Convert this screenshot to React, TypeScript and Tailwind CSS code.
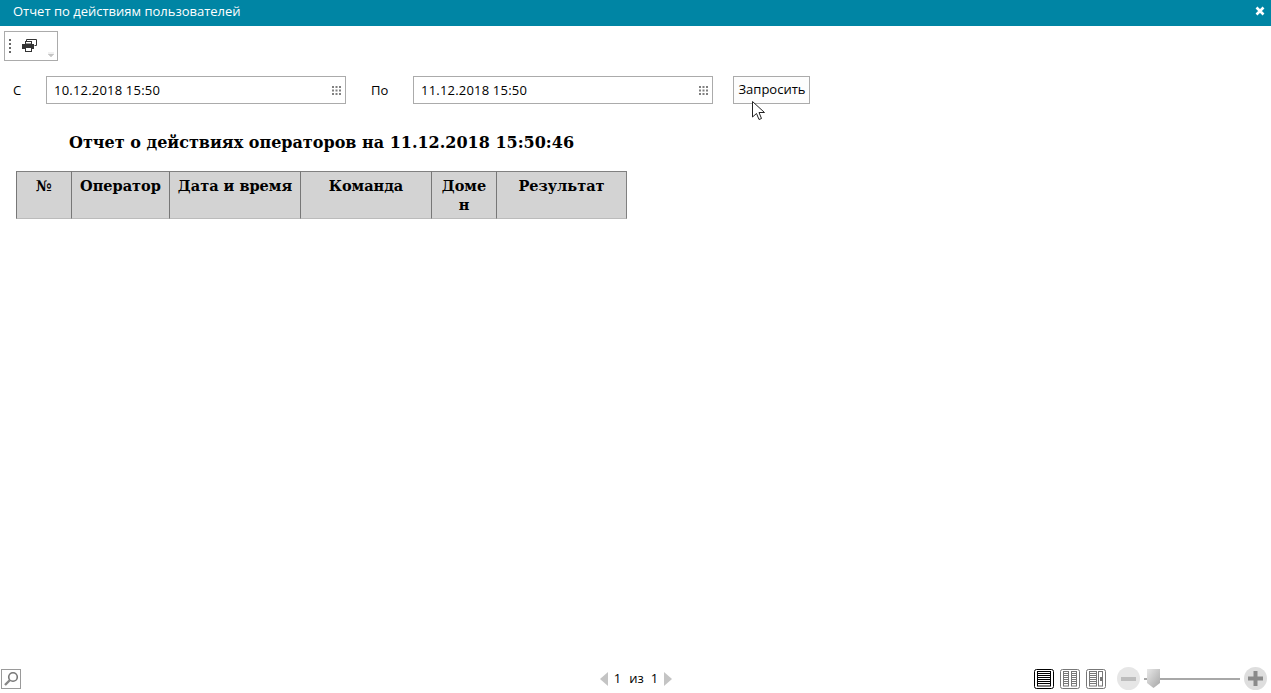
const uiFont = "font-['Open_Sans','Noto_Sans',sans-serif]";

function GridDots() {
  return (
    <svg width="9" height="9" viewBox="0 0 9 9" className="shrink-0">
      <path fill="#808080" d="M0 0h2v2H0zM3.500 0h2v2h-2zM7 0h2v2H7zM0 3.500h2v2H0zM3.500 3.500h2v2h-2zM7 3.500h2v2H7zM0 7h2v2H0zM3.500 7h2v2h-2zM7 7h2v2H7z" />
    </svg>
  );
}

function DateField({ value }: { value: string }) {
  return (
    <div className="flex h-7 w-[300px] items-center justify-between border border-[#ababab] bg-white pr-[4px] pl-[7px] text-[13px] text-black">
      <span className="translate-y-px tracking-[0.2px]">{value}</span>
      <GridDots />
    </div>
  );
}

function PrintIcon() {
  return (
    <svg width="15" height="13" viewBox="0 0 15 13">
      <path fill="none" stroke="#333" strokeWidth="1" d="M4.500 3V.5h10v6h-2" />
      <path fill="#333" d="M0 5h12v5h-2V8H3v2H0z" />
      <rect x="3.500" y="2.500" width="6" height="2.500" fill="#fff" stroke="#333" />
      <rect x="3.500" y="8.500" width="6" height="4" fill="#fff" stroke="#333" />
    </svg>
  );
}

function ViewIcon({ kind, active }: { kind: "single" | "double" | "side"; active?: boolean }) {
  const c = active ? "#000" : "#777";
  const lines = (x: number, w: number) =>
    [4, 6, 8, 10, 12, 14].map((y) => (
      <path key={`${x}-${y}`} d={`M${x} ${y + 0.5}h${w}`} stroke={c} strokeWidth="1" />
    ));
  return (
    <svg width="20" height="20" viewBox="0 0 20 20">
      <rect x="0.500" y="0.500" width="19" height="19" rx="2" fill="#fff" stroke={c} />
      {kind === "single" && (
        <>
          <rect x="3.500" y="2.500" width="13" height="14.500" fill="none" stroke={c} />
          {lines(4, 12)}
        </>
      )}
      {kind === "double" && (
        <>
          <rect x="3.500" y="2.500" width="5" height="14.500" fill="none" stroke={c} />
          <rect x="11.500" y="2.500" width="5" height="14.500" fill="none" stroke={c} />
          {lines(4, 4)}
          {lines(12, 4)}
        </>
      )}
      {kind === "side" && (
        <>
          <rect x="3.500" y="2.500" width="7" height="14.500" fill="none" stroke={c} />
          <rect x="12.500" y="2.500" width="4" height="14.500" fill="none" stroke={c} />
          {lines(4, 6)}
          <rect x="14" y="8" width="2.500" height="4" fill={c} />
        </>
      )}
    </svg>
  );
}

const columns = [
  { label: "№", width: "w-[55px]" },
  { label: "Оператор", width: "w-[98px]" },
  { label: "Дата и время", width: "w-[131px]" },
  { label: "Команда", width: "w-[131px]" },
  { label: "Домен", width: "w-[65px]" },
  { label: "Результат", width: "w-[131px]" },
];

export default function App() {
  return (
    <div className={`relative flex h-[693px] flex-col overflow-hidden bg-white ${uiFont}`}>
      {/* title bar */}
      <div className="flex h-[26px] items-center justify-between bg-[#0085a4] pr-[6px] pl-[13px] text-[13px] text-white">
        <span className="-translate-y-px">Отчет по действиям пользователей</span>
        <svg width="10" height="10" viewBox="0 0 10 10" className="-translate-y-[2px]">
          <path d="M1.500 1.500l7 7M8.500 1.500l-7 7" stroke="#fff" strokeWidth="2.600" />
        </svg>
      </div>

      {/* toolbar */}
      <div className="px-1 pt-[5px]">
        <div className="flex h-[30px] w-[54px] items-center border border-[#ababab] pl-[4px]">
          <div className="flex flex-col gap-[2px]">
            <span className="h-[2px] w-[2px] bg-[#666]" />
            <span className="h-[2px] w-[2px] bg-[#666]" />
            <span className="h-[2px] w-[2px] bg-[#666]" />
            <span className="h-[2px] w-[2px] bg-[#666]" />
          </div>
          <div className="mb-[2px] ml-[11px]">
            <PrintIcon />
          </div>
          <svg width="6" height="5" viewBox="0 0 6 5" className="mt-[17px] ml-[11px]">
            <path d="M0 0h6M0 2h6L3 5z" fill="#c4c4c4" stroke="#c4c4c4" strokeWidth="0.500" />
          </svg>
        </div>
      </div>

      {/* query form */}
      <div className="mt-[15px] flex items-center text-[13px] text-black">
        <span className="w-[46px] translate-y-px pl-[13px]">С</span>
        <DateField value="10.12.2018 15:50" />
        <span className="w-[67px] translate-y-px pl-[25px]">По</span>
        <DateField value="11.12.2018 15:50" />
        <button className="ml-5 flex h-7 w-[77px] items-center justify-center border border-[#ababab] bg-[#fdfdfd] pl-px text-[13px] text-black">
          Запросить
        </button>
      </div>

      {/* report */}
      <h1 className="mt-[26px] pl-[69px] font-['DejaVu_Serif',serif] text-[16px] leading-[26px] font-bold text-black">
        Отчет о действиях операторов на 11.12.2018 15:50:46
      </h1>
      <div className="mt-[15px] pl-4">
        <table className="w-[611px] table-fixed border-separate border-spacing-0 font-['DejaVu_Serif',serif] text-[14.500px] leading-[19px] font-bold text-black">
          <thead>
            <tr>
              {columns.map((col) => (
                <th
                  key={col.label}
                  className={`h-[48px] border-t border-b border-l border-t-[#808080] border-b-[#bbbbbb] border-l-[#777777] bg-[#d3d3d3] px-[6px] pt-[4px] pb-[4px] align-top font-bold break-all last:border-r last:border-r-[#808080] ${col.width}`}
                >
                  {col.label === "Домен" ? (
                    <>
                      Доме
                      <br />н
                    </>
                  ) : (
                    col.label
                  )}
                </th>
              ))}
            </tr>
          </thead>
        </table>
      </div>

      {/* footer */}
      <div className="mt-auto grid h-[25px] grid-cols-3 items-center pb-[5px] text-[13px] text-black">
        <div className="pl-[1px]">
          <div className="flex h-5 w-5 -translate-y-px items-center justify-center border border-[#9a9a9a]">
            <svg width="16" height="16" viewBox="0 0 16 16">
              <circle cx="10" cy="6" r="4.300" fill="#fff" stroke="#777" strokeWidth="1.600" />
              <path d="M7 9l-5 5" stroke="#888" strokeWidth="2.400" />
            </svg>
          </div>
        </div>
        <div className="flex -translate-y-px items-center justify-center pl-px">
          <svg width="8" height="14" viewBox="0 0 8 14">
            <path d="M8 0v14L0 7z" fill="#c4c4c4" />
          </svg>
          <span className="ml-[6px]">1</span>
          <span className="ml-[8px]">из</span>
          <span className="ml-[7px]">1</span>
          <svg width="8" height="14" viewBox="0 0 8 14" className="ml-[6px]">
            <path d="M0 0v14l8-7z" fill="#c4c4c4" />
          </svg>
        </div>
        <div className="flex -translate-y-px items-center justify-end pr-[4px]">
          <ViewIcon kind="single" active />
          <div className="ml-[6px]">
            <ViewIcon kind="double" />
          </div>
          <div className="ml-[6px]">
            <ViewIcon kind="side" />
          </div>
          <div className="ml-[11px] flex h-[23px] w-[23px] items-center justify-center rounded-full bg-[#e6e6e6]">
            <span className="h-[4px] w-[15px] bg-[#bdbdbd]" />
          </div>
          <div className="relative ml-[4px] flex h-[22px] w-[96px] items-center">
            <span className="h-[2px] w-full bg-[#a8a8a8]" />
            <svg width="15" height="20" viewBox="0 0 15 20" className="absolute left-[2px]">
              <defs>
                <linearGradient id="thumb" x1="0" y1="0" x2="1" y2="1">
                  <stop offset="0" stopColor="#e8e8e8" />
                  <stop offset="1" stopColor="#a6a6a6" />
                </linearGradient>
              </defs>
              <path d="M1 0h13v14l-6.500 5-6.500-5z" fill="url(#thumb)" />
            </svg>
          </div>
          <div className="ml-[4px] flex h-[23px] w-[23px] items-center justify-center rounded-full bg-[#dedede]">
            <svg width="15" height="15" viewBox="0 0 15 15">
              <path d="M0 5.500h5.500V0h4v5.500H15v4H9.500V15h-4V9.500H0z" fill="#8a8a8a" />
            </svg>
          </div>
        </div>
      </div>

      {/* mouse pointer */}
      <svg width="14" height="20" viewBox="0 0 14 20" className="absolute top-[101px] left-[752px]">
        <path d="M.5.500v15.500l4-3.500 2.500 6 2.500-1-2.500-6h5.500z" fill="#fff" stroke="#222" strokeWidth="1" />
      </svg>
    </div>
  );
}
